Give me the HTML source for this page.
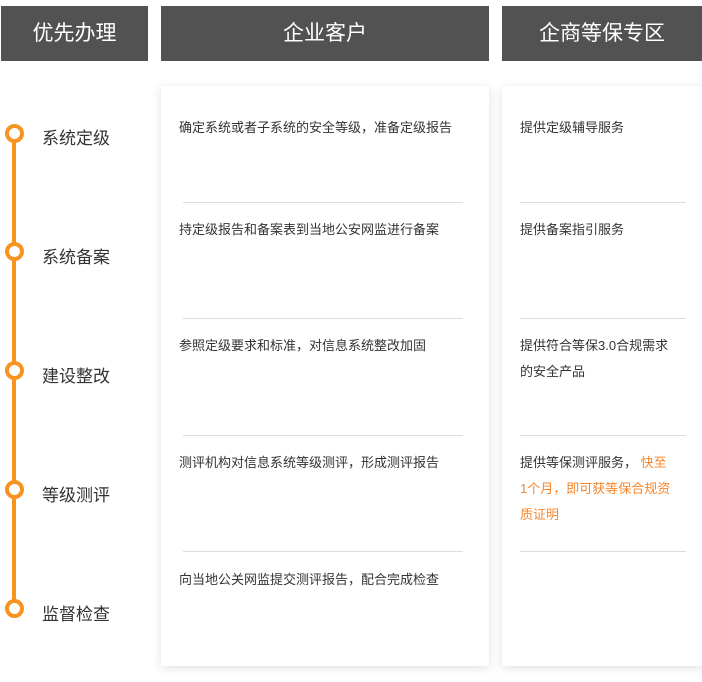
<!DOCTYPE html><html><head><meta charset="utf-8"><style>
body{margin:0;width:702px;height:682px;background:#fff;position:relative;overflow:hidden;font-family:"Liberation Sans","Noto Sans CJK SC",sans-serif;}
.h{position:absolute;top:6px;height:55px;background:#525252;color:#fff;font-size:21px;line-height:55px;text-align:center;}
.card{position:absolute;top:86px;height:580px;background:#fff;box-shadow:0 2px 10px rgba(0,0,0,.12);}
.t{position:absolute;font-size:13px;color:#333;line-height:26px;}
.d{position:absolute;height:1px;background:#ddd;}
.lab{position:absolute;left:42px;font-size:17px;color:#333;}
.c{position:absolute;left:5px;width:11px;height:11px;border:4px solid #f7931e;border-radius:50%;background:#fff;}
.o{color:#f7862b;}
</style></head><body>
<div class="h" style="left:1px;width:147px">优先办理</div>
<div class="h" style="left:161px;width:328px">企业客户</div>
<div class="h" style="left:502px;width:200px">企商等保专区</div>
<div style="position:absolute;left:12px;top:135px;width:4px;height:475px;background:#f7931e"></div>
<div class="c" style="top:124px"></div><div class="lab" style="top:124px">系统定级</div>
<div class="c" style="top:242px"></div><div class="lab" style="top:243px">系统备案</div>
<div class="c" style="top:361px"></div><div class="lab" style="top:362px">建设整改</div>
<div class="c" style="top:480px"></div><div class="lab" style="top:481px">等级测评</div>
<div class="c" style="top:599px"></div><div class="lab" style="top:600px">监督检查</div>
<div class="card" style="left:161px;width:328px"></div>
<div class="card" style="left:502px;width:205px"></div>
<div class="t" style="left:179px;top:115px">确定系统或者子系统的安全等级，准备定级报告</div>
<div class="d" style="left:183px;width:280px;top:202px"></div>
<div class="t" style="left:179px;top:217px">持定级报告和备案表到当地公安网监进行备案</div>
<div class="d" style="left:183px;width:280px;top:318px"></div>
<div class="t" style="left:179px;top:333px">参照定级要求和标准，对信息系统整改加固</div>
<div class="d" style="left:183px;width:280px;top:435px"></div>
<div class="t" style="left:179px;top:450px">测评机构对信息系统等级测评，形成测评报告</div>
<div class="d" style="left:183px;width:280px;top:551px"></div>
<div class="t" style="left:179px;top:567px">向当地公关网监提交测评报告，配合完成检查</div>
<div class="t" style="left:520px;top:115px">提供定级辅导服务</div>
<div class="d" style="left:520px;width:166px;top:202px"></div>
<div class="t" style="left:520px;top:217px">提供备案指引服务</div>
<div class="d" style="left:520px;width:166px;top:318px"></div>
<div class="t" style="left:520px;top:333px;">提供符合等保3.0合规需求<br>的安全产品</div>
<div class="d" style="left:520px;width:166px;top:435px"></div>
<div class="t" style="left:520px;top:450px;">提供等保测评服务， <span class="o">快至<br>1个月，即可获等保合规资<br>质证明</span></div>
<div class="d" style="left:520px;width:166px;top:551px"></div>
</body></html>
